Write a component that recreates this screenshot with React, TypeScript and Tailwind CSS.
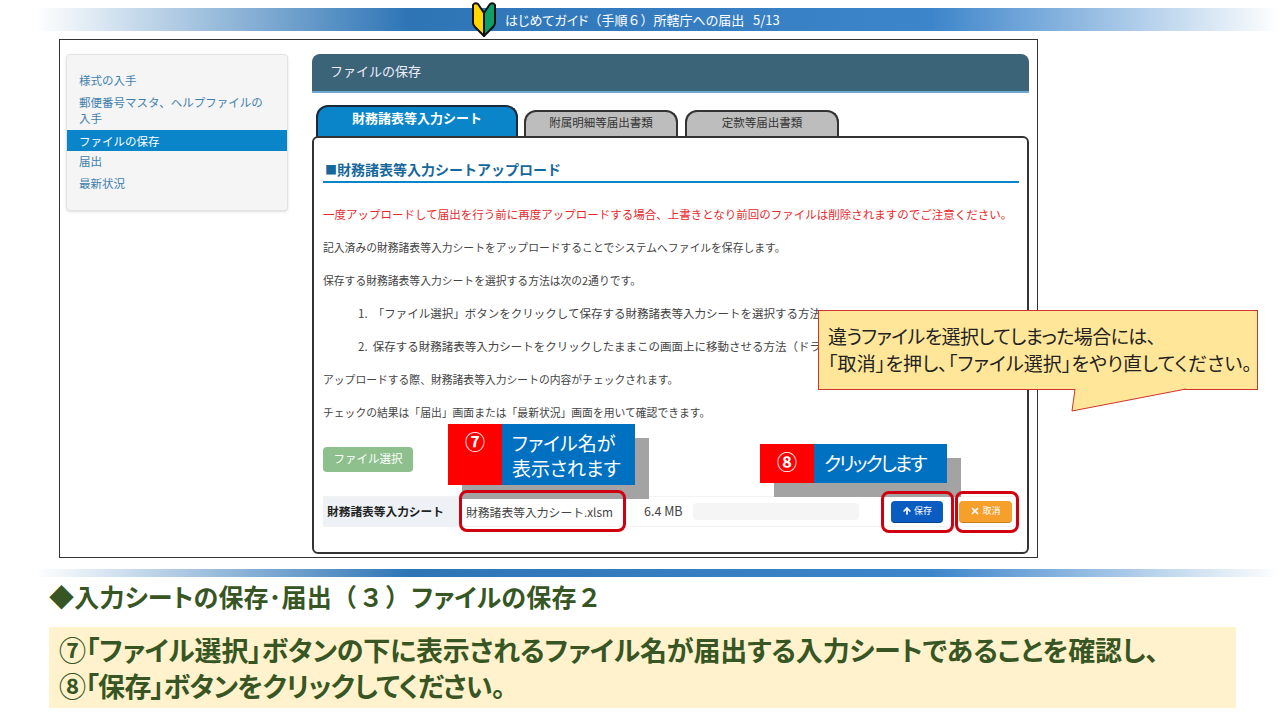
import { ArrowUp, X } from "lucide-react";

const steps = [
  "「ファイル選択」ボタンをクリックして保存する財務諸表等入力シートを選択する方法",
  "保存する財務諸表等入力シートをクリックしたままこの画面上に移動させる方法（ドラッグ＆ドロップ）",
];

const BeginnerMark = () => (
  <svg viewBox="0 0 26 36" className="absolute left-[471px] top-[1px] w-[26px] h-[36px]">
    <path d="M13 12 L7 3 Q4 1 2 4 L2 22 Q2 24 4 26 L13 35 Z" fill="#ffd800" stroke="#111" strokeWidth="2" strokeLinejoin="round" />
    <path d="M13 12 L19 3 Q22 1 24 4 L24 22 Q24 24 22 26 L13 35 Z" fill="#0f9d68" stroke="#111" strokeWidth="2" strokeLinejoin="round" />
  </svg>
);

const Sidebar = () => (
  <div className="w-[222px] h-[157px] bg-[#f5f5f5] border border-[#e3e3e3] rounded shadow-sm pt-[14px] text-[11.5px] text-[#3f7fae] leading-[16px]">
    <div className="px-[12px] py-[3px]">様式の入手</div>
    <div className="px-[12px] pt-[3px] pb-[4px]">郵便番号マスタ、ヘルプファイルの<br />入手</div>
    <div className="px-[12px] py-[3px] h-[21px] bg-[#0a85c9] text-white">ファイルの保存</div>
    <div className="px-[12px] pt-[2px] pb-[3px] h-[21px]">届出</div>
    <div className="px-[12px] pt-[3px] pb-[3px]">最新状況</div>
  </div>
);

const Tabs = () => (
  <div className="flex items-end pl-[4px] h-[33px] mt-[12px] -mb-[2px] relative">
    <div className="w-[202px] h-[33px] bg-[#0a85c9] border-2 border-b-0 border-[#1a2a3a] rounded-t-xl text-white text-[13px] font-bold text-center leading-[22px]">
      財務諸表等入力シート
    </div>
    <div className="w-[154px] h-[28px] ml-[6px] bg-[#bdbdbd] border-2 border-b-0 border-[#333] rounded-t-xl text-[#333] text-[11.5px] text-center leading-[20px]">
      附属明細等届出書類
    </div>
    <div className="w-[154px] h-[28px] ml-[7px] bg-[#bdbdbd] border-2 border-b-0 border-[#333] rounded-t-xl text-[#333] text-[11.5px] text-center leading-[20px]">
      定款等届出書類
    </div>
  </div>
);

const UploadRow = () => (
  <div className="flex items-center h-[31px] mt-[24px] text-[11.8px] text-[#444] border-y border-[#f3f3f3]">
    <div className="w-[136px] h-full bg-[#eef2f7] pl-[4px] font-bold text-[11.7px] text-[#222] leading-[28px]">財務諸表等入力シート</div>
    <div className="w-[176px] pl-[7px]">財務諸表等入力シート.xlsm</div>
    <div className="w-[53px] text-[#444] text-[12.5px] pl-[9px]">6.4 MB</div>
    <div className="w-[166px] h-[17px] ml-[5px] bg-[#f5f5f5] rounded-sm"></div>
    <div className="flex items-center justify-center gap-[2px] w-[52px] h-[22px] ml-[32px] rounded-sm bg-[#0b5cc0] text-white text-[9px] border-b border-[#0a3f8a]">
      <ArrowUp size={10} strokeWidth={4} />
      保存
    </div>
    <div className="flex items-center justify-center gap-[2px] w-[53px] h-[22px] ml-[16px] rounded-sm bg-[#f6a02b] text-white text-[9px] border-b border-[#c98020]">
      <X size={10} strokeWidth={4} />
      取消
    </div>
  </div>
);

const Panel = () => (
  <div className="w-[717px] h-[418px] bg-white border-2 border-[#333] rounded-md relative pl-[9px] pr-[8px] pt-[21px]">
    <div className="h-[24px] border-b-2 border-[#0a85c9] text-[14px] font-bold text-[#16689c] leading-[20px]">
      <span className="text-[12px] pl-[2px]">■</span>財務諸表等入力シートアップロード
    </div>
    <div className="text-[10.8px] text-[#444] leading-[16px] flex flex-col gap-[17px] mt-[23px]">
      <div className="text-[#e8292c] text-[11.5px] whitespace-nowrap">一度アップロードして届出を行う前に再度アップロードする場合、上書きとなり前回のファイルは削除されますのでご注意ください。</div>
      <div>記入済みの財務諸表等入力シートをアップロードすることでシステムへファイルを保存します。</div>
      <div>保存する財務諸表等入力シートを選択する方法は次の2通りです。</div>
      {steps.map((step, i) => (
        <div key={i} className="pl-[35px] text-[11.5px] whitespace-nowrap overflow-hidden">
          {i + 1}.&nbsp;&nbsp;{step}
        </div>
      ))}
      <div>アップロードする際、財務諸表等入力シートの内容がチェックされます。</div>
      <div>チェックの結果は「届出」画面または「最新状況」画面を用いて確認できます。</div>
    </div>
    <div className="w-[90px] h-[25px] mt-[27px] bg-[#8dc08d] rounded-sm text-white text-[11.5px] text-center leading-[23px]">ファイル選択</div>
    <UploadRow />
  </div>
);

const Badge = ({ num, lines, className, textClass }: { num: string; lines: string[]; className: string; textClass?: string }) => (
  <div className={`absolute flex shadow-[14px_14px_0_#a3a3a3] [font-feature-settings:'palt'] ${className}`}>
    <div className="w-[54px] bg-[#ff0000] text-white text-[20px] font-bold text-center pt-[4px] leading-[28px]">{num}</div>
    <div className={`w-[133px] bg-[#0070c0] text-white text-[19px] leading-[25px] pl-[10px] flex flex-col justify-center ${textClass ?? ""}`}>
      {lines.map((l) => (
        <div key={l}>{l}</div>
      ))}
    </div>
  </div>
);

export default function App() {
  return (
    <div className="relative w-[1280px] h-[720px] overflow-hidden bg-white pt-[8px] font-['Noto_Sans_CJK_JP',sans-serif]">
      <div className="h-[23px] ml-[35px] bg-[linear-gradient(to_right,#ffffff_0%,#2e75b6_30%,#3d85cb_72%,#ffffff_100%)] text-white text-[13px] leading-[23px] pl-[470px] [font-feature-settings:'palt']">
        はじめてガイド<span className="[font-feature-settings:normal]">（手順６）</span>所轄庁への届出&nbsp;&nbsp;&nbsp;5/13
      </div>

      <div className="w-[979px] h-[519px] ml-[59px] mt-[8px] border border-[#333] flex pl-[6px] pt-[14px] gap-[24px]">
        <Sidebar />
        <div className="w-[717px]">
          <div className="h-[39px] bg-[#3c6478] border-b-[2px] border-[#6fa8d0] rounded-t-lg text-[#eef] text-[13px] pl-[18px] leading-[33px]">
            ファイルの保存
          </div>
          <Tabs />
          <Panel />
        </div>
      </div>

      <div className="h-[8px] mt-[11px] ml-[35px] bg-[linear-gradient(to_right,#ffffff_0%,#2e75b6_30%,#3d85cb_72%,#ffffff_100%)]"></div>
      <div className="ml-[49px] mt-[4px] text-[25px] font-bold text-[#375623] leading-[30px] tracking-[0.2px] whitespace-nowrap [font-feature-settings:'palt']">
        ◆入力シートの保存･届出<span className="[font-feature-settings:normal] tracking-[1.5px]">（３）</span>ファイルの保存<span className="[font-feature-settings:normal]">２</span>
      </div>
      <div className="w-[1187px] h-[81px] ml-[49px] mt-[16px] bg-[#fff2cc] text-[#375623] text-[27px] font-bold leading-[36px] pl-[10px] pt-[5px] whitespace-nowrap [font-feature-settings:'palt']">
        <span className="tracking-[-0.2px]">⑦「ファイル選択」ボタンの下に表示されるファイル名が届出する入力シートであることを確認し、</span>
        <br />
        <span className="tracking-[-0.7px]">⑧「保存」ボタンをクリックしてください。</span>
      </div>

      <BeginnerMark />

      <Badge num="⑦" lines={["ファイル名が", "表示されます"]} className="left-[448px] top-[424px] h-[61px]" />
      <Badge num="⑧" lines={["クリックします"]} textClass="tracking-[-2px] pb-[3px]" className="left-[760px] top-[444px] h-[39px]" />

      <div className="absolute left-[459px] top-[490px] w-[167px] h-[42px] border-[3px] border-[#d00010] rounded-lg"></div>
      <div className="absolute left-[881px] top-[491px] w-[73px] h-[42px] border-[3px] border-[#d00010] rounded-lg"></div>
      <div className="absolute left-[955px] top-[491px] w-[64px] h-[42px] border-[3px] border-[#d00010] rounded-lg"></div>

      <div className="absolute left-[818px] top-[310px] w-[440px] h-[80px] bg-[#ffe699] border border-[#d0342c] pl-[9px] pt-[11px] text-[19px] leading-[27px] text-[#222] whitespace-nowrap [font-feature-settings:'palt']">
        <span className="tracking-[-0.6px]">違うファイルを選択してしまった場合には、</span>
        <br />
        <span className="tracking-[0.1px]">「取消」を押し、「ファイル選択」をやり直してください。</span>
      </div>
      <svg viewBox="0 0 120 24" className="absolute left-[1070px] top-[388px] w-[120px] h-[24px]">
        <path d="M5 1 L2 23 L116 1" fill="#ffe699" stroke="#d0342c" strokeWidth="1" />
      </svg>
    </div>
  );
}
